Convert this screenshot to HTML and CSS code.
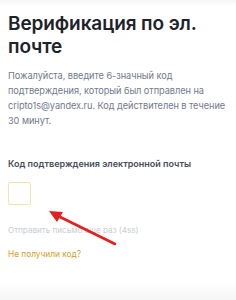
FILE: index.html
```html
<!DOCTYPE html>
<html lang="ru">
<head>
<meta charset="utf-8">
<link rel="stylesheet" href="styles.css">
</head>
<body>
<main class="page">
  <h1 class="title">Верификация по эл. почте</h1>
  <p class="desc">Пожалуйста, введите 6-значный код подтверждения, который был отправлен на cripto1s@yandex.ru. Код действителен в течение 30 минут.</p>
  <div class="label">Код подтверждения электронной почты</div>
  <div class="code-box"></div>
  <div class="resend">Отправить письмо еще раз (4ss)</div>
  <a class="nocode">Не получили код?</a>
  <svg class="arrow" width="80" height="45" viewBox="0 0 80 45">
    <line x1="67" y1="33" x2="6" y2="3" stroke="#e3201e" stroke-width="2.6" stroke-linecap="round"/>
    <polygon points="1,0 15,1 9,11" fill="#e3201e"/>
  </svg>
</main>
<div class="bottom"></div>
</body>
</html>
```
FILE: styles.css
```css
html, body {
  margin: 0;
  padding: 0;
  background: #fff;
}
body {
  width: 236px;
  height: 300px;
  overflow: hidden;
  position: relative;
  font-family: Inter, "Noto Sans", sans-serif;
  background: linear-gradient(#f6f6f6 0, #ffffff 6px, #ffffff 282px, #f6f6f6 300px);
}
.page {
  position: relative;
  padding: 12px 4px 0 8px;
  display: flex;
  flex-direction: column;
  align-items: flex-start;
}
.title {
  margin: 0;
  font-size: 19px;
  line-height: 23px;
  font-weight: 600;
  color: #1e2329;
  letter-spacing: -0.1px;
}
.desc {
  margin: 10px 0 0 0;
  font-size: 9.2px;
  line-height: 15px;
  color: #707a8a;
  width: 224px;
  letter-spacing: -0.05px;
}
.label {
  margin-top: 30px;
  font-size: 9px;
  line-height: 12px;
  font-weight: 600;
  color: #474d57;
}
.code-box {
  margin-top: 12px;
  width: 21px;
  height: 21px;
  border: 1px solid #f3e3a8;
  border-radius: 2px;
}
.resend {
  margin-top: 19px;
  font-size: 8.1px;
  line-height: 12px;
  color: #c9cdd3;
}
.nocode {
  margin-top: 12px;
  font-size: 8.3px;
  line-height: 12px;
  color: #cf9d2c;
}
.arrow {
  position: absolute;
  left: 48px;
  top: 211px;
}
```
